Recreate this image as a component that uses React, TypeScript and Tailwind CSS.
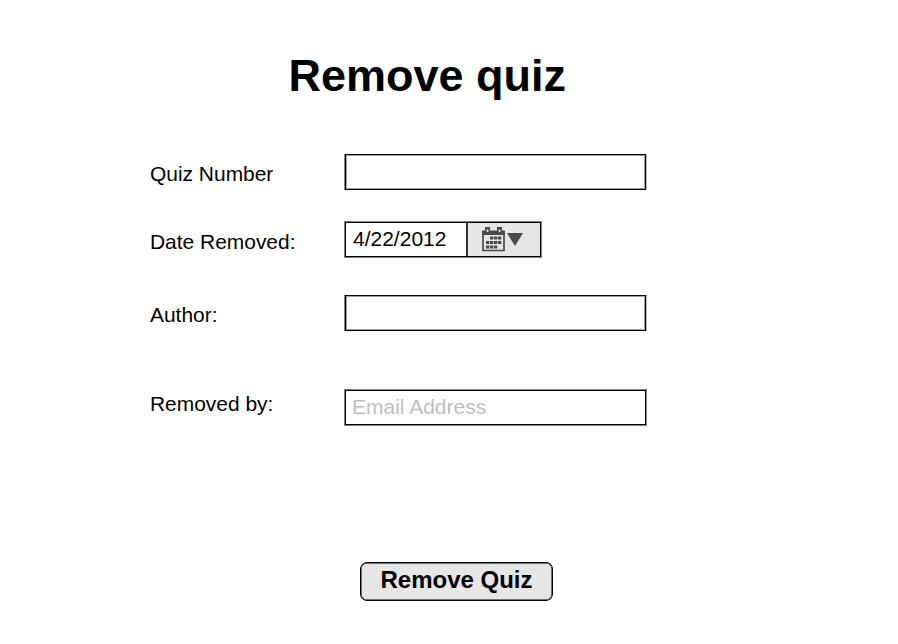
import type { ReactNode } from "react";

function Row({ label, gap, offset, children }: { label: string; gap: string; offset: string; children: ReactNode }) {
  return (
    <div className={`flex h-9 ${gap}`}>
      <label className={`w-[195px] shrink-0 text-[20.95px] leading-6 whitespace-nowrap ${offset}`}>{label}</label>
      {children}
    </div>
  );
}

function CalendarIcon() {
  return (
    <svg className="shrink-0" width="24" height="25" viewBox="0 0 24 25" fill="none" aria-hidden="true">
      <path d="M1 4V23.5H22V4" stroke="#4a4a4a" strokeWidth="1.7" />
      <path d="M0.2 3.5H22.8V8H0.2Z" fill="#4a4a4a" />
      <path d="M3 0H8V5H3ZM15 0H20V5H15Z" fill="#4a4a4a" />
      <path d="M4.7 2.5h1.7V5H4.7zM16.7 2.5h1.7V5h-1.7z" fill="#e6e6e6" />
      <path d="M8 9.4h3.3v3.2H8zM12 9.4h3.3v3.2H12zM16 9.4h3.3v3.2H16zM4 13.9h3.3v3.2H4zM8 13.9h3.3v3.2H8zM12 13.9h3.3v3.2H12zM16 13.9h3.3v3.2H16zM4 18.4h3.3v3.2H4zM8 18.4h3.3v3.2H8zM12 18.4h3.3v3.2H12z" fill="#4a4a4a" />
    </svg>
  );
}

export default function App() {
  return (
    <main className="h-[644px] w-[898px] overflow-hidden bg-white font-['Liberation_Sans',Arial,sans-serif] text-black">
      <h1 className="ml-[288.5px] pt-[51px] text-[45px] leading-[50px] font-bold whitespace-nowrap">Remove quiz</h1>
      <form className="ml-[150px]">
        <Row label="Quiz Number" gap="mt-[53px]" offset="pt-[8px]">
          <input className="h-9 w-[301px] border border-black shadow-[inset_0_0_0_1px_#a0a0a0,-1px_0_0_#808080,1px_0_0_#bbbbbb] outline-none" />
        </Row>
        <Row label="Date Removed:" gap="mt-8" offset="pt-[8px]">
          <div className="flex h-[35px] w-[196px] border border-black bg-white shadow-[0_0_0_1px_#808080]">
            <span className="w-[120px] pl-[7px] text-[21px] leading-[31px]">4/22/2012</span>
            <button type="button" className="flex flex-1 items-center border-l-2 border-[#333] bg-[#e6e6e6] pl-[14px]">
              <CalendarIcon />
              <svg className="mb-[1px] ml-[1px] shrink-0" width="16" height="13" viewBox="0 0 16 13" aria-hidden="true"><path d="M0 0H16L8 13Z" fill="#4a4a4a" /></svg>
            </button>
          </div>
        </Row>
        <Row label="Author:" gap="mt-[37px]" offset="pt-[8px]">
          <input className="h-9 w-[301px] border border-black shadow-[inset_0_0_0_1px_#a0a0a0,-1px_0_0_#808080,1px_0_0_#bbbbbb] outline-none" />
        </Row>
        <Row label="Removed by:" gap="mt-[59px]" offset="pt-[2px]">
          <input placeholder="Email Address" className="h-[35px] w-[301px] border border-black pb-[2px] pl-[6px] text-[21px] shadow-[0_0_0_1px_#808080] outline-none placeholder:text-[#bfbfbf]" />
        </Row>
        <button type="button" className="mt-[136px] ml-[210px] h-[39px] w-[193px] rounded-[7px] border border-black bg-[#e6e6e6] pb-[3px] text-[24px] leading-[34px] font-bold shadow-[inset_0_0_0_0.5px_#000]">Remove Quiz</button>
      </form>
    </main>
  );
}
